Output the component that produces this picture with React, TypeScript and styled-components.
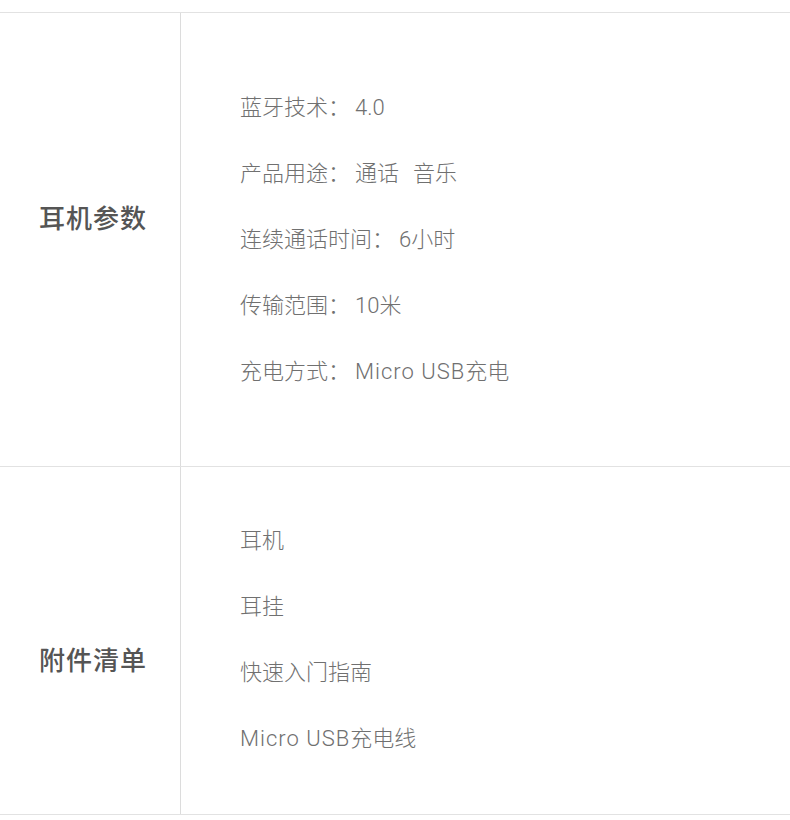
import React from "react";
import styled, { createGlobalStyle } from "styled-components";

const GlobalStyle = createGlobalStyle`
  body {
    margin: 0;
    background: #fff;
    font-family: "Noto Sans CJK SC", "Noto Sans", sans-serif;
  }
`;

const Table = styled.div`
  margin-top: 12px;
  width: 790px;
  border-top: 1px solid #e2e2e2;
`;

const Row = styled.div`
  display: grid;
  grid-template-columns: 181px 1fr;
  border-bottom: 1px solid #e2e2e2;
`;

const LabelCell = styled.div<{ $shift: number }>`
  display: flex;
  align-items: center;
  justify-content: center;
  border-right: 1px solid #dcdcdc;
  padding-top: ${(p) => (p.$shift > 0 ? p.$shift * 2 : 0)}px;
  padding-bottom: ${(p) => (p.$shift < 0 ? -p.$shift * 2 : 0)}px;
  padding-left: 6px;
`;

const Label = styled.span`
  font-size: 26px;
  font-weight: 500;
  color: #555;
  letter-spacing: 1px;
`;

const Items = styled.ul<{ $top: number; $bottom: number }>`
  list-style: none;
  margin: 0;
  padding: ${(p) => p.$top}px 0 ${(p) => p.$bottom}px 59px;
`;

const Item = styled.li`
  height: 66px;
  line-height: 66px;
  font-family: Roboto, "Noto Sans CJK SC", sans-serif;
  font-size: 22px;
  font-weight: 300;
  color: #707070;
  white-space: nowrap;
`;

const Value = styled.span`
  margin-left: 5px;
`;

const Latin = styled.span`
  letter-spacing: 1px;
`;

const Gap = styled.span`
  display: inline-block;
  width: 14px;
`;

const specs: { name: string; value: React.ReactNode }[] = [
  { name: "蓝牙技术", value: "4.0" },
  {
    name: "产品用途",
    value: (
      <>
        通话
        <Gap />
        音乐
      </>
    ),
  },
  { name: "连续通话时间", value: "6小时" },
  { name: "传输范围", value: "10米" },
  {
    name: "充电方式",
    value: (
      <>
        <Latin>Micro USB</Latin>充电
      </>
    ),
  },
];

const accessories: { key: string; text: React.ReactNode }[] = [
  { key: "a", text: "耳机" },
  { key: "b", text: "耳挂" },
  { key: "c", text: "快速入门指南" },
  {
    key: "d",
    text: (
      <>
        <Latin>Micro USB</Latin>充电线
      </>
    ),
  },
];

export default function App() {
  return (
    <>
      <GlobalStyle />
      <Table>
        <Row>
          <LabelCell $shift={-23}>
            <Label>耳机参数</Label>
          </LabelCell>
          <Items $top={62} $bottom={61}>
            {specs.map((s) => (
              <Item key={s.name}>
                {s.name}：<Value>{s.value}</Value>
              </Item>
            ))}
          </Items>
        </Row>
        <Row>
          <LabelCell $shift={18}>
            <Label>附件清单</Label>
          </LabelCell>
          <Items $top={41} $bottom={42}>
            {accessories.map((a) => (
              <Item key={a.key}>{a.text}</Item>
            ))}
          </Items>
        </Row>
      </Table>
    </>
  );
}
